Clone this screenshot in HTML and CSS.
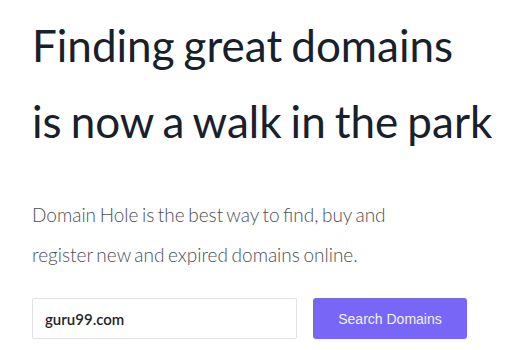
FILE: index.html
```html
<!DOCTYPE html>
<html lang="en">
<head>
<meta charset="utf-8">
<link rel="stylesheet" href="styles.css">
</head>
<body>
<main class="hero">
  <h1 class="hero-title">Finding great domains<br>is now a walk in the park</h1>
  <p class="hero-text">Domain Hole is the best way to find, buy and<br>register new and expired domains online.</p>
  <form class="search">
    <input class="search-input" type="text" value="guru99.com">
    <button class="search-btn" type="button">Search Domains</button>
  </form>
</main>
</body>
</html>
```
FILE: styles.css
```css
html, body {
  margin: 0;
  padding: 0;
  background: #ffffff;
}
.hero {
  padding: 7px 0 0 32px;
  font-family: Lato, "Liberation Sans", sans-serif;
}
.hero-title {
  margin: 0;
  font-size: 44px;
  font-weight: 400;
  line-height: 76px;
  word-spacing: -2.2px;
  color: #17212b;
}
.hero-text {
  margin: 36px 0 0;
  font-size: 19px;
  font-weight: 300;
  line-height: 40px;
  word-spacing: -1.6px;
  color: #4a4f55;
}
.search {
  display: flex;
  gap: 16px;
  margin-top: 23px;
}
.search-input {
  box-sizing: border-box;
  width: 265px;
  height: 41px;
  padding: 0 12px;
  border: 1px solid #dfe3e8;
  border-radius: 2px;
  font-family: Lato, sans-serif;
  font-size: 15px;
  font-weight: 600;
  color: #1f252b;
  outline: none;
}
.search-btn {
  box-sizing: border-box;
  width: 154px;
  height: 41px;
  border: none;
  border-radius: 3px;
  background: #7866f7;
  color: #f4f2ff;
  font-family: "Liberation Sans", Arial, sans-serif;
  font-size: 14px;
}
```
